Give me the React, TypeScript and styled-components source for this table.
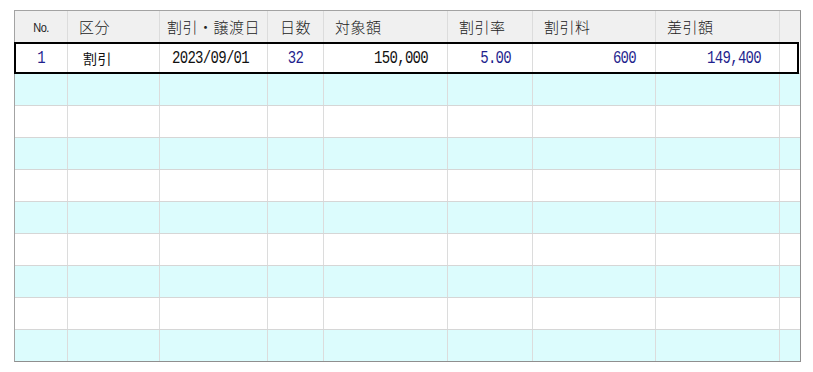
import React from 'react'
import styled, { createGlobalStyle } from 'styled-components'

const GlobalStyle = createGlobalStyle`
  html, body {
    margin: 0;
    padding: 0;
    background: #ffffff;
  }
`

const Page = styled.div`
  padding: 10px 14px 0 14px;
  font-family: "Noto Sans CJK JP", "Noto Sans", sans-serif;
`

const Grid = styled.div`
  width: 785px;
  border: 1px solid #a3a3a3;
  border-right-color: #8f8f8f;
  border-bottom-color: #8f8f8f;
  background: #ffffff;
`

const COLS = '53px 92px 108px 56px 124px 85px 123px 124px 1fr'

const HeadRow = styled.div`
  display: grid;
  grid-template-columns: ${COLS};
  height: 31px;
  background: #f0f0f0;
`

const HeadCell = styled.div<{ $align?: 'left' | 'center' }>`
  display: flex;
  align-items: center;
  justify-content: ${p => (p.$align === 'center' ? 'center' : 'flex-start')};
  padding-left: ${p => (p.$align === 'center' ? '0' : '11px')};
  border-right: 1px solid #dcdcdc;
  font-size: 15px;
  font-weight: 300;
  color: #222;
  letter-spacing: 0.5px;
  white-space: nowrap;
  &:last-child { border-right: none; }
`

const NoLabel = styled.span`
  font-family: "Liberation Sans", sans-serif;
  font-size: 11px;
  letter-spacing: -0.6px;
  transform: scaleY(1.2);
  color: #222;
`

const Row = styled.div<{ $tint?: boolean; $selected?: boolean }>`
  position: relative;
  display: grid;
  grid-template-columns: ${COLS};
  height: 32px;
  box-sizing: border-box;
  border-bottom: 1px solid #d6d6d6;
  background: ${p => (p.$tint ? '#dcfcfd' : '#ffffff')};
  &:last-child { border-bottom: none; height: 31px; }
  ${p =>
    p.$selected &&
    `
    &::after {
      content: '';
      position: absolute;
      left: -1px;
      right: 1px;
      top: 0;
      bottom: -1px;
      border: 2px solid #000;
      pointer-events: none;
    }
  `}
`

const Cell = styled.div<{ $align?: 'left' | 'center' | 'right'; $pad?: number; $navy?: boolean }>`
  display: flex;
  align-items: center;
  justify-content: ${p =>
    p.$align === 'center' ? 'center' : p.$align === 'right' ? 'flex-end' : 'flex-start'};
  padding: ${p =>
    p.$align === 'right' ? `0 ${p.$pad ?? 0}px 0 0` : p.$align === 'left' ? `0 0 0 ${p.$pad ?? 0}px` : '0'};
  border-right: 1px solid #dcdcdc;
  color: ${p => (p.$navy ? '#1f1f8e' : '#111')};
  font-family: "Noto Sans CJK JP", sans-serif;
  font-size: 14px;
  letter-spacing: 0.5px;
  white-space: nowrap;
  &:last-child { border-right: none; }
`

// narrow, tall digits like the gothic monospace of the original
const Num = styled.span`
  display: inline-block;
  font-family: "Liberation Mono", monospace;
  font-size: 14px;
  letter-spacing: -0.7px;
  transform: scaleY(1.25);
`

const headers: { label: string; align: 'left' | 'center' }[] = [
  { label: '区分', align: 'left' },
  { label: '割引・譲渡日', align: 'center' },
  { label: '日数', align: 'center' },
  { label: '対象額', align: 'left' },
  { label: '割引率', align: 'left' },
  { label: '割引料', align: 'left' },
  { label: '差引額', align: 'left' },
]

const EmptyRow = ({ tint }: { tint: boolean }) => (
  <Row $tint={tint}>
    {Array.from({ length: 9 }).map((_, i) => (
      <Cell key={i} />
    ))}
  </Row>
)

export default function App() {
  return (
    <>
      <GlobalStyle />
      <Page>
        <Grid>
          <HeadRow>
            <HeadCell $align="center">
              <NoLabel>No.</NoLabel>
            </HeadCell>
            {headers.map(h => (
              <HeadCell key={h.label} $align={h.align}>
                {h.label}
              </HeadCell>
            ))}
            <HeadCell />
          </HeadRow>

          <Row $selected>
            <Cell $align="center" $navy><Num>1</Num></Cell>
            <Cell $align="left" $pad={15}>割引</Cell>
            <Cell $align="left" $pad={12}><Num>2023/09/01</Num></Cell>
            <Cell $align="center" $navy><Num>32</Num></Cell>
            <Cell $align="right" $pad={19}><Num>150,000</Num></Cell>
            <Cell $align="right" $pad={21} $navy><Num>5.00</Num></Cell>
            <Cell $align="right" $pad={19} $navy><Num>600</Num></Cell>
            <Cell $align="right" $pad={18} $navy><Num>149,400</Num></Cell>
            <Cell />
          </Row>

          {Array.from({ length: 9 }).map((_, i) => (
            <EmptyRow key={i} tint={i % 2 === 0} />
          ))}
        </Grid>
      </Page>
    </>
  )
}
